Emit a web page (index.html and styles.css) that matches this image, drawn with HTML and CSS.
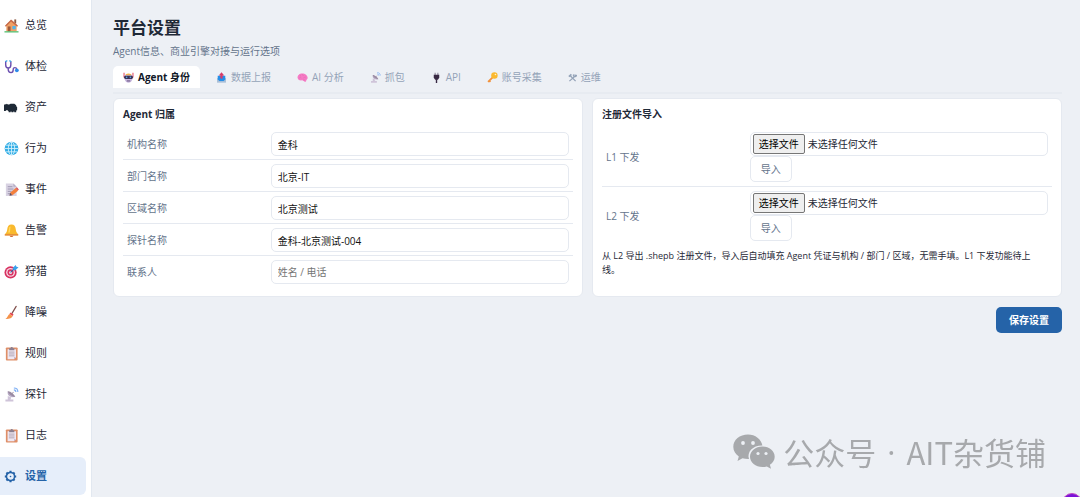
FILE: index.html
```html
<!DOCTYPE html>
<html lang="zh-CN">
<head>
<meta charset="utf-8">
<meta name="viewport" content="width=device-width, initial-scale=1">
<title>平台设置</title>
<link rel="stylesheet" href="styles.css">
</head>
<body>
<svg class="sprite" aria-hidden="true">
  <symbol id="i-house" viewBox="0 0 16 16"><path fill="#8b5a44" d="M11 1.500h2V6h-2z"/><path fill="#f0a065" d="M2.500 7 8 2l5.500 5v7.500h-11z"/><path fill="#c4694a" d="M7.500 1.500 15 8.300l-1 1L7.500 3.600 2 9.200 1 8.300z"/><path fill="#9c5a3c" d="M4 9h3v5.500H4z"/><path fill="#4fb4ec" d="M9 8.500h3.500V12H9z"/><path fill="#5fc27a" d="M.5 14h15v1.500H.5z"/></symbol>
  <symbol id="i-steth" viewBox="0 0 16 16"><g fill="none" stroke-width="1.500" stroke-linecap="round"><path stroke="#6a4fb0" d="M1.800 3v3c0 2.500 1.200 3.500 2.700 3.500S7.300 8.500 7.300 6V3M4.500 9.500v1.800c0 2 1.200 3.200 3 3.200s2.300-1.500 2.300-3 .6-2.300 1.800-2.300 1.900.7 2 1.800"/><path stroke="#3fa6e8" d="M2 2.500 3 2M7.100 2.500 6.200 2"/></g><circle cx="13.700" cy="12" r="2" fill="#2f8bea"/></symbol>
  <symbol id="i-asset" viewBox="0 0 16 16"><path fill="#1e2936" d="M0 5.500 1 4.200l1 .6 1-.8 1.200.8h1.300L7 4h4l2 1.500v1.200l1 .8v3.300l-1 .5V13h-2v-.7h-1V13H8v-.7H7V13H5v-.7L3.800 11H2v.8H0z"/></symbol>
  <symbol id="i-globe" viewBox="0 0 16 16"><circle cx="8" cy="8" r="7.300" fill="#35aee6"/><g fill="none" stroke="#d8f2fc" stroke-width=".9"><ellipse cx="8" cy="8" rx="3.400" ry="7"/><path d="M8 1v14M1 8h14M2.200 4.500h11.600M2.200 11.500h11.600"/></g></symbol>
  <symbol id="i-memo" viewBox="0 0 16 16"><path fill="#d8d2e2" d="M2 1.500h8L13.500 5v9.800H2z"/><path fill="#b7afc6" d="M10 1.500V5h3.500z"/><path stroke="#8e86a3" stroke-width=".8" d="M4 5h5M4 7.500h6M4 10h4M4 12.500h4"/><path fill="#f4803c" d="m6.500 11.500 6-5 2.500 2.700-6 5z"/><path fill="#d94c55" d="m12.500 6.500 1.300-1 2 2.600-1 1z"/><path fill="#6b4b52" d="m6.500 11.500-.7 3.200 3.200-.5z"/></symbol>
  <symbol id="i-bell" viewBox="0 0 16 16"><path fill="#f9b92d" d="M8 1.500c3 0 4.200 2 4.500 5 .2 2.500.9 4 2.500 5.500H1c1.600-1.500 2.300-3 2.500-5.500.3-3 1.500-5 4.500-5z"/><path fill="#ffda62" d="M5.800 4.500 7 3.500 6.300 10H4.500z"/><path fill="#e58b2f" d="M.8 11.800h14.400v1.700H.8z"/><path fill="#d36b34" d="M6 13.500h4c-.4 2-3.600 2-4 0z"/></symbol>
  <symbol id="i-target" viewBox="0 0 16 16"><circle cx="7" cy="9" r="6.500" fill="#d83261"/><circle cx="7" cy="9" r="4.700" fill="#f6dce7"/><circle cx="7" cy="9" r="3.300" fill="#d83261"/><circle cx="7" cy="9" r="1.600" fill="#f6dce7"/><path stroke="#3863a4" stroke-width="1.200" d="m7 9 5-5"/><path fill="#3aa2ed" d="m9.500 4 3-3 .8 1.800 2.200.7-3 3-2.200.2z"/></symbol>
  <symbol id="i-broom" viewBox="0 0 16 16"><path stroke="#80504c" stroke-width="1.300" stroke-linecap="round" d="M13 1.500 8.500 9"/><path fill="#e54552" d="m7 8 3.200 2.200-1 1.600-3.400-2.300z"/><path fill="#f5934b" d="m5.800 9.500 3.400 2.300c-.7 2-2.700 3-7.700 3.200 2-1.500 2.800-4.500 4.300-5.500z"/></symbol>
  <symbol id="i-clip" viewBox="0 0 16 16"><rect x="2" y="1.500" width="12.500" height="14" rx="1" fill="#df8f68"/><path fill="#f0e8f2" d="M3.800 3.500h9v8.500l-2 2h-7z"/><path fill="#b9a9c4" d="M12.800 12h-2v2z"/><path fill="#8c8091" d="M5.500 2.500H7c0-2 2.500-2 2.500 0H11v2H5.500z"/><path stroke="#a79aac" stroke-width=".9" d="M5.200 6.500h6M5.200 8.500h6M5.200 10.500h6"/></symbol>
  <symbol id="i-dish" viewBox="0 0 16 16"><path fill="#b9adc7" d="M4 4.500c-1 4.500 3 7.500 8 6z"/><path fill="#9a8ba2" d="M4 4.500c2-.8 7.500 3.500 8 6-3 0-7.500-3-8-6z"/><path fill="#cfc4d9" d="m4 9.500 4 1.800-1.300 1.900H10V15.500H1.500v-2.300H4z"/><path stroke="#9a8ba2" d="m8 7.500 2.300-2.300"/><path fill="none" stroke="#7fb0f4" stroke-width="1.200" d="M10.500 3c1.500 0 2.200.8 2.200 2.200M10.500 1c3 0 4.300 1.300 4.300 4.200"/></symbol>
  <symbol id="i-gear" viewBox="0 0 16 16"><g fill="none" stroke="currentColor"><circle cx="8" cy="8" r="5" stroke-width="1.900"/><path stroke-width="2.600" d="M8 1v2.500M8 12.500V15M1 8h2.500M12.500 8H15M3 3l1.500 1.500M11.500 11.500 13 13M13 3l-1.500 1.500M4.500 11.500 3 13"/></g><circle cx="8" cy="8" r="1" fill="currentColor"/></symbol>
  <symbol id="i-robot" viewBox="0 0 16 16"><path stroke="#e34a62" stroke-width="1.500" d="M1.500 1v7M14.500 1v7"/><path fill="#c9b9df" d="M2.500 4.500Q8 2 13.500 4.500v6Q12.500 15.500 8 15.500T2.500 10.500z"/><path fill="#f1b34b" d="M4 3.300Q8 .8 12 3.300v1.500H4z"/><rect x="1.500" y="5.500" width="13" height="4.500" rx="2" fill="#3b3256"/><circle cx="5.300" cy="7.800" r="1.200" fill="#54a9e8"/><circle cx="10.700" cy="7.800" r="1.200" fill="#54a9e8"/><path stroke="#594270" stroke-width="1.300" d="M5.500 13h5"/></symbol>
  <symbol id="i-outbox" viewBox="0 0 16 16"><path fill="#a9bfd8" d="M1.500 9h13v6.500h-13z"/><path fill="#258ee8" d="M2.500 5.500h11V11l-2.500 2H5l-2.500-2z"/><path fill="#d83b68" d="m8 .5 4 4.500H9.600v4.500H6.400V5H4z"/></symbol>
  <symbol id="i-brain" viewBox="0 0 16 16"><path fill="#f57bc5" d="M1 9C0 5 3.500 2 7.500 2c4.500 0 8 2.800 8 6.500 0 2-1.500 2.800-2 3.500.3 2-1.500 3-3.200 1.500L8 12c-3.500.7-6-.2-7-3z"/><g fill="none" stroke="#e468ae" stroke-width=".8"><path d="M4 4.500c1 .3 1.500 1 1.300 2M8 3c-.8 1.500.3 2.500 2 2.300M3 9c1.500-1.200 3-1 3.800.3M9 9c1-1.500 3-1.300 4 0M12 5c-.5.500-.5 1.200 0 1.800M8.500 12c.8-.8 2-.8 3 0"/></g></symbol>
  <symbol id="i-plug" viewBox="0 0 16 16"><path stroke="#8b8298" stroke-width="1.500" d="M6 1v4M10 1v4"/><path fill="#382943" d="M4 4h8v4.500L10 11.200H6L4 8.500z"/><path stroke="#382943" stroke-width="2" d="M8 10.500V16"/></symbol>
  <symbol id="i-key" viewBox="0 0 16 16"><path stroke="#f2923b" stroke-width="2.500" d="M9 7 1.500 14.500M3 12.500l2 2"/><circle cx="10.800" cy="5.200" r="4.700" fill="#fbb92f"/><circle cx="12.300" cy="3.700" r="1.200" fill="#fff0c8"/></symbol>
  <symbol id="i-tools" viewBox="0 0 16 16"><g fill="none" stroke="currentColor" stroke-width="2.200"><path d="m4 5 9.500 9.500M12 6l-9.500 8.500"/><path stroke-width="3" d="M1.500 6.500 6 2.500"/><path d="M10 2.500c-1 2 .5 4.500 3 4 1.200-.2 2-1 2-2.200l-2.200.4-.8-2"/></g></symbol>
  <symbol id="i-wechat" viewBox="0 0 42 36"><path fill="#a7a9ac" d="M15 .5C6.700.5.300 5.800.300 12.800c0 4 2.200 7.400 5.500 9.700L4.500 27l5-2.700c2 .6 4.200.9 6.500.8-2.300-7.200 4-13.700 13.400-13.500C28.300 5.300 22.300.5 15 .5z"/><path fill="#a7a9ac" d="M29.500 12.500c-7 0-12.500 4.500-12.500 10.200S22.500 33 29.500 33c1.500 0 3-.2 4.300-.6l4.200 2.300-1.100-3.900c2.900-1.900 4.800-4.700 4.800-8.100 0-5.700-5.300-10.200-12.200-10.200z"/><g fill="#edf0f5"><circle cx="10" cy="9" r="1.900"/><circle cx="20" cy="9" r="1.900"/><circle cx="25" cy="19.500" r="1.600"/><circle cx="33" cy="19.500" r="1.600"/></g></symbol>
</svg>

<div class="app">
  <nav class="sidebar" aria-label="主导航">
    <a class="nav-item" href="#overview"><svg class="nav-icon"><use href="#i-house"/></svg>总览</a>
    <a class="nav-item" href="#health"><svg class="nav-icon"><use href="#i-steth"/></svg>体检</a>
    <a class="nav-item" href="#assets"><svg class="nav-icon"><use href="#i-asset"/></svg>资产</a>
    <a class="nav-item" href="#behavior"><svg class="nav-icon"><use href="#i-globe"/></svg>行为</a>
    <a class="nav-item" href="#events"><svg class="nav-icon"><use href="#i-memo"/></svg>事件</a>
    <a class="nav-item" href="#alerts"><svg class="nav-icon"><use href="#i-bell"/></svg>告警</a>
    <a class="nav-item" href="#hunting"><svg class="nav-icon"><use href="#i-target"/></svg>狩猎</a>
    <a class="nav-item" href="#denoise"><svg class="nav-icon"><use href="#i-broom"/></svg>降噪</a>
    <a class="nav-item" href="#rules"><svg class="nav-icon"><use href="#i-clip"/></svg>规则</a>
    <a class="nav-item" href="#probes"><svg class="nav-icon"><use href="#i-dish"/></svg>探针</a>
    <a class="nav-item" href="#logs"><svg class="nav-icon"><use href="#i-clip"/></svg>日志</a>
    <a class="nav-item nav-item-active" href="#settings" aria-current="page"><svg class="nav-icon nav-icon-small"><use href="#i-gear"/></svg>设置</a>
  </nav>

  <main class="main">
    <h1 class="title">平台设置</h1>
    <p class="subtitle">Agent信息、商业引擎对接与运行选项</p>

    <div class="tabs" role="tablist">
      <button class="tab tab-active" type="button" role="tab" aria-selected="true"><svg class="tab-icon"><use href="#i-robot"/></svg>Agent 身份</button>
      <button class="tab" type="button" role="tab"><svg class="tab-icon"><use href="#i-outbox"/></svg>数据上报</button>
      <button class="tab" type="button" role="tab"><svg class="tab-icon"><use href="#i-brain"/></svg>AI 分析</button>
      <button class="tab" type="button" role="tab"><svg class="tab-icon"><use href="#i-dish"/></svg>抓包</button>
      <button class="tab" type="button" role="tab"><svg class="tab-icon"><use href="#i-plug"/></svg>API</button>
      <button class="tab" type="button" role="tab"><svg class="tab-icon"><use href="#i-key"/></svg>账号采集</button>
      <button class="tab" type="button" role="tab"><svg class="tab-icon tab-icon-small"><use href="#i-tools"/></svg>运维</button>
    </div>

    <form class="settings">
      <div class="cards">
        <section class="card">
          <h2 class="card-title">Agent 归属</h2>
          <div class="row"><label class="label" for="org">机构名称</label><input class="input" id="org" type="text" value="金科"></div>
          <div class="row"><label class="label" for="dept">部门名称</label><input class="input" id="dept" type="text" value="北京-IT"></div>
          <div class="row"><label class="label" for="region">区域名称</label><input class="input" id="region" type="text" value="北京测试"></div>
          <div class="row"><label class="label" for="probe">探针名称</label><input class="input" id="probe" type="text" value="金科-北京测试-004"></div>
          <div class="row"><label class="label" for="contact">联系人</label><input class="input" id="contact" type="text" placeholder="姓名 / 电话"></div>
        </section>

        <section class="card">
          <h2 class="card-title">注册文件导入</h2>
          <div class="row row-upload">
            <label class="label" for="file-l1">L1 下发</label>
            <div class="upload">
              <label class="file"><input class="file-input" id="file-l1" type="file"><span class="file-button">选择文件</span><span class="file-name">未选择任何文件</span></label>
              <button class="import" type="button">导入</button>
            </div>
          </div>
          <div class="row row-upload">
            <label class="label" for="file-l2">L2 下发</label>
            <div class="upload">
              <label class="file"><input class="file-input" id="file-l2" type="file"><span class="file-button">选择文件</span><span class="file-name">未选择任何文件</span></label>
              <button class="import" type="button">导入</button>
            </div>
          </div>
          <p class="note">从 L2 导出 .shepb 注册文件，导入后自动填充 Agent 凭证与机构 / 部门 / 区域，无需手填。L1 下发功能待上线。</p>
        </section>
      </div>
      <button class="save" type="submit">保存设置</button>
    </form>
  </main>
</div>

<div class="watermark"><svg class="watermark-logo"><use href="#i-wechat"/></svg><div class="watermark-text"><span>公众号</span><span class="watermark-dot">·</span><span>AIT杂货铺</span></div></div>
<button class="bubble" type="button" aria-label="助手"></button>
</body>
</html>
```
FILE: styles.css
```css
* {
  box-sizing: border-box;
}

body {
  margin: 0;
  background: #edf0f5;
  color: #1f2937;
  font: 10px/14px "Open Sans", "Noto Sans CJK SC", sans-serif;
  overflow: hidden;
}

button,
input {
  font: inherit;
}

.sprite {
  position: absolute;
  width: 0;
  height: 0;
}

.app {
  display: flex;
  min-height: 100vh;
}

.sidebar {
  display: flex;
  flex: 0 0 92px;
  flex-direction: column;
  gap: 3px;
  padding: 6px 5px 0 0;
  background: #fff;
  border-right: 1px solid #e2e8f0;
}

.nav-item {
  display: flex;
  align-items: center;
  gap: 6px;
  height: 38px;
  padding-left: 4px;
  border-radius: 0 6px 6px 0;
  color: #1f2937;
  font-size: 11px;
  text-decoration: none;
}

.nav-item-active {
  background: #e6eefa;
  color: #2563a8;
  font-weight: 700;
}

.nav-icon {
  width: 15px;
  height: 15px;
}

.nav-icon-small {
  width: 13px;
  height: 13px;
  margin-right: 2px;
}

.main {
  flex: 1;
  min-width: 0;
  padding: 16px 18px 0 21px;
}

.title {
  margin: 0;
  font-size: 17px;
  line-height: 24px;
}

.subtitle {
  margin: 4px 0 8px;
  color: #64748b;
}

.tabs {
  display: flex;
  gap: 6px;
  padding-bottom: 4px;
  border-bottom: 2px solid #e7ebf1;
}

.tab {
  display: flex;
  align-items: center;
  gap: 4px;
  height: 22px;
  padding: 0 10px;
  border: 0;
  border-radius: 5px 5px 0 0;
  background: none;
  color: #94a3b8;
}

.tab-active {
  background: #fff;
  color: #111827;
  font-weight: 700;
}

.tab-icon {
  width: 11px;
  height: 11px;
}

.tab-icon-small {
  width: 9px;
  height: 9px;
}

.cards {
  display: grid;
  grid-template-columns: 1fr 1fr;
  gap: 9px;
  margin-top: 4px;
}

.card {
  padding: 8px 9px;
  background: #fff;
  border: 1px solid #e5e9f0;
  border-radius: 6px;
}

.card-title {
  margin: 0 0 7px;
  font-size: 10px;
  line-height: 14px;
}

.row {
  display: grid;
  grid-template-columns: 32% 1fr;
  align-items: center;
  padding: 4px 4px 3px 0;
  border-bottom: 1px solid #e5e9f0;
}

.row-upload {
  padding-bottom: 4px;
}

.row:last-child,
.row:nth-last-child(2):has(+ .note) {
  border-bottom: 0;
}

.row:last-child {
  padding-bottom: 4px;
}

.label {
  padding-left: 4px;
  color: #64748b;
}

.input,
.upload {
  margin-left: 5px;
}

.input,
.file {
  height: 24px;
  min-width: 0;
  background: #fff;
  border: 1px solid #e5e9f0;
  border-radius: 5px;
}

.input {
  padding: 0 6px;
  color: #111;
}

.input::placeholder {
  color: #757575;
}

.file {
  position: relative;
  display: flex;
  align-items: center;
  gap: 3px;
  padding: 0 2px;
}

.file-input {
  position: absolute;
  inset: 0;
  width: 100%;
  opacity: 0;
}

.file-button {
  padding: 1px 5px;
  background: #efefef;
  border: 1px solid #767676;
  border-radius: 2px;
  color: #000;
  line-height: 16px;
}

.import {
  display: block;
  height: 26px;
  padding: 0 10px;
  background: #fff;
  border: 1px solid #e5e9f0;
  border-radius: 5px;
  color: #64748b;
}

.note {
  margin: 4px 0 0;
  padding-right: 8px;
  font-size: 9px;
  line-height: 14px;
}

.save {
  display: block;
  height: 26px;
  margin: 10px 0 0 auto;
  padding: 0 13px;
  background: #2563a8;
  border: 0;
  border-radius: 5px;
  color: #fff;
  font-weight: 700;
}

.watermark {
  position: fixed;
  right: 34px;
  bottom: 23px;
  display: flex;
  align-items: center;
  gap: 8px;
  color: #a7a9ac;
  font: 400 31px/44px "Noto Sans CJK SC", sans-serif;
  pointer-events: none;
}

.watermark-text {
  display: flex;
  gap: 11px;
}

.watermark-dot {
  font-family: "Open Sans", sans-serif;
}

.watermark-logo {
  width: 42px;
  height: 36px;
}

.bubble {
  position: fixed;
  right: -2px;
  bottom: -16px;
  width: 20px;
  height: 20px;
  padding: 0;
  background: #7a12d8;
  border: 1px solid #c04bc0;
  border-radius: 50%;
}
```
